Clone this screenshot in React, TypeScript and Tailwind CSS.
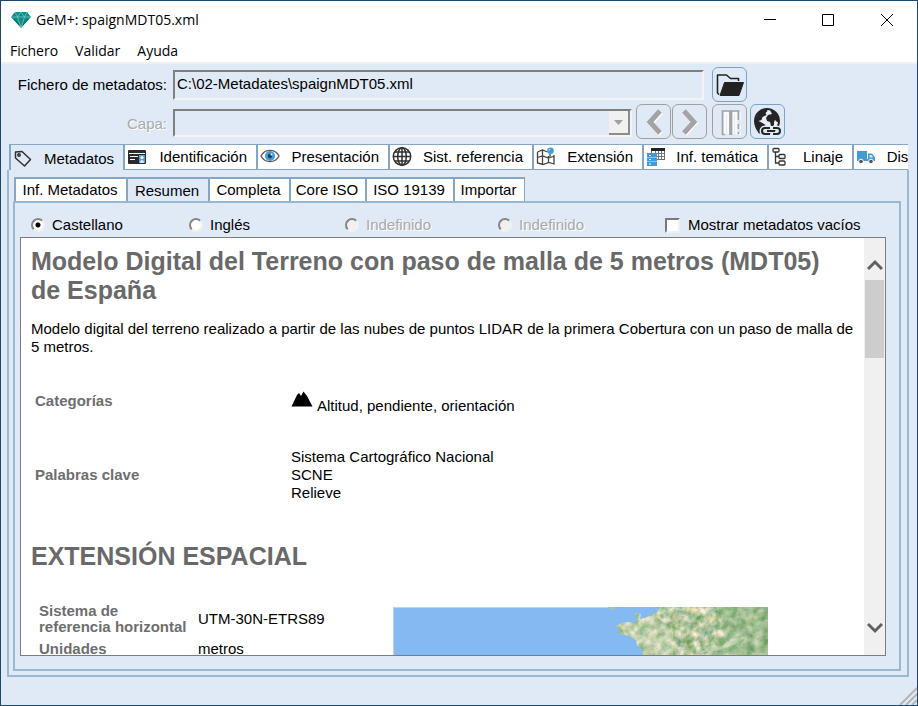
import React, { useState } from 'react';
import clsx from 'clsx';

const LogoIcon = () => (
    <svg width="20" height="18" viewBox="0 0 20 18">
        <path d="M4 1h12l4 5-10 11L0 6z" fill="#0f8b85" />
        <path d="M0.500 6h19M4 1l2.500 5L10 1l3.500 5L16 1M6.500 6L10 17l3.500-11" fill="none" stroke="#7fd0c8" strokeWidth="0.700" />
        <path d="M3 8l5 6M17 8l-5 6" stroke="#0a625e" strokeWidth="1" />
    </svg>
);

const TagIcon = () => (
    <svg width="20" height="20" viewBox="0 0 20 20" fill="none" stroke="#303030" strokeWidth="1.500">
        <path d="M2.500 3L9 2.500l8.500 8-6 6.500-9-8z" strokeLinejoin="round" />
        <circle cx="6" cy="6" r="1.200" />
    </svg>
);

const CardIcon = () => (
    <svg width="20" height="20" viewBox="0 0 20 20">
        <rect x="1" y="3" width="18" height="14" rx="1" fill="#2b2b2b" />
        <rect x="2" y="6" width="16" height="1" fill="#fff" />
        <rect x="3" y="9" width="8" height="1" fill="#fff" />
        <rect x="3" y="12" width="5" height="1" fill="#fff" />
        <rect x="12" y="8" width="6" height="8" fill="#4da3dc" />
        <circle cx="15" cy="10.500" r="1.500" fill="#fff" />
        <path d="M13 16c0-4 4-4 4 0z" fill="#d7ecfa" />
    </svg>
);

const EyeIcon = () => (
    <svg width="20" height="20" viewBox="0 0 20 20">
        <path d="M1 9C5 1.500 15 1.500 19 9 15 16.500 5 16.500 1 9z" fill="#fff" stroke="#5a5a5a" strokeWidth="1.400" />
        <circle cx="10" cy="9" r="5" fill="#429bd5" />
        <circle cx="10" cy="9" r="2.200" fill="#1d3f5a" />
        <circle cx="11.500" cy="7.500" r="1" fill="#fff" />
    </svg>
);

const GridGlobeIcon = () => (
    <svg width="20" height="20" viewBox="0 0 20 20" fill="none" stroke="#303030" strokeWidth="1.500">
        <circle cx="10" cy="9.500" r="8.700" />
        <ellipse cx="10" cy="9.500" rx="4.300" ry="8.700" />
        <path d="M10 1v17M1.500 9.500h17M3 5h14M3 14h14" />
    </svg>
);

const MapIcon = () => (
    <svg width="20" height="20" viewBox="0 0 20 20" fill="none" stroke="#444" strokeWidth="1.300">
        <path d="M1.500 5l5-2 5 2M18 8v9l-5-1.500-6 2-5.500-1.500V5M6.500 3v14M12.500 9v7M1.500 10.500l5-1.500 6 2 5-1.500" />
        <path d="M14 5v6" stroke="#666" strokeWidth="1.500" />
        <circle cx="14.500" cy="3.800" r="3.300" fill="#429bd5" stroke="none" />
        <circle cx="13.500" cy="2.800" r="1" fill="#a9d4f0" stroke="none" />
    </svg>
);

const ThemeIcon = () => (
    <svg width="20" height="20" viewBox="0 0 20 20">
        <rect x="5.500" y="1.500" width="13" height="11" fill="#fff" stroke="#666" />
        <rect x="5" y="1" width="14" height="3" fill="#222" />
        <path d="M6 6.500h13M6 9.500h13M9.500 4v9M12.500 4v9M15.500 4v9" stroke="#777" />
        <path d="M1 6h10v13H1z" fill="#429bd5" />
        <path d="M1 10.500h10M1 14.500h10" stroke="#8cc4e9" />
        <path d="M3 8.500h2M3 12.500h2M3 17h2" stroke="#fff" />
    </svg>
);

const TreeIcon = () => (
    <svg width="20" height="20" viewBox="0 0 20 20" fill="none" stroke="#333" strokeWidth="1.300">
        <rect x="2" y="1.500" width="6" height="3.500" rx="1" />
        <rect x="8" y="7.500" width="6" height="4" rx="1" />
        <rect x="8" y="14" width="6" height="4" rx="1" />
        <path d="M4.500 5v11H8M4.500 9.500H8" />
    </svg>
);

const TruckIcon = () => (
    <svg width="20" height="20" viewBox="0 0 20 20">
        <path d="M1 4h10v10H1zM12 6.500h4l3 4V14h-7z" fill="#429bd5" />
        <path d="M11 12h1v2h-1z" fill="#429bd5" />
        <path d="M13.500 8h2l1.500 2.500h-3.500z" fill="#d7ecfa" />
        <circle cx="5" cy="14.500" r="2.300" fill="#555" stroke="#fff" />
        <circle cx="15" cy="14.500" r="2.300" fill="#555" stroke="#fff" />
    </svg>
);

const FolderIcon = () => (
    <svg width="30" height="26" viewBox="0 0 30 26">
        <path d="M4 22.500L2.500 21V3h9l4 3.500h8V9" fill="none" stroke="#222" strokeWidth="1.600" strokeLinejoin="round" />
        <path d="M9.500 10.500H28.500L24 23.500H5z" fill="#222" stroke="#222" strokeLinejoin="round" />
    </svg>
);

const ArrowIcon = ({ d }: { d: string }) => (
    <svg width="30" height="30" viewBox="0 0 30 30" fill="none" strokeWidth="5">
        <path d={d} stroke="#fff" transform="translate(1 1)" />
        <path d={d} stroke="#a3a3a3" />
    </svg>
);

const ColumnsIcon = () => (
    <svg width="30" height="30" viewBox="0 0 30 30" fill="none">
        <path d="M10 27V6h3v21M18 27V6h3v21M25 5v8M25 18v4M25 25v3" stroke="#fff" strokeWidth="1.500" />
        <path d="M7.500 28V4H15v24M16.500 28V4H23.500v9M23.500 17v5M23.500 25v2M7 27.500h3" stroke="#a3a3a3" strokeWidth="1.700" />
    </svg>
);

const WorldLinkIcon = () => (
    <svg width="30" height="30" viewBox="0 0 30 30">
        <circle cx="14" cy="14" r="12" fill="#e8eef6" stroke="#252525" strokeWidth="2" />
        <path d="M2.500 12l3-6 4-3 4-1 1 2-2 2 1 2-4 2-1 3-3 1 4 2 3 2-1 3-3 2-1 4-2-1-3-5z" fill="#252525" />
        <path d="M17 3l4 1 4 5 1 6-2 0-2-2-1 2 0 4-3 0-1-4-3-1-1-3 2-3 4-1-1-2z" fill="#252525" />
        <g fill="none">
            <path d="M16 21h-4a3 3 0 0 0 0 6h4M20 21h4a3 3 0 0 1 0 6h-4M14 24h8" stroke="#e0eaf6" strokeWidth="5" />
            <path d="M17 21h-5a3 3 0 0 0 0 6h5M20 21h4a3 3 0 0 1 0 6h-4M14 24h8" stroke="#252525" strokeWidth="2" />
        </g>
    </svg>
);

const MountainIcon = () => (
    <svg width="22" height="16" viewBox="0 0 22 16" className="mr-1 inline-block align-[4px]">
        <path d="M0.500 15.500L6 4l2-2 2 3 2.500-4.500L16 5l5.500 10.500z" fill="#000" />
    </svg>
);

const CoastMap = () => (
    <svg width="375" height="280" viewBox="0 0 375 280" role="img" aria-label="Mapa de extensión">
        <defs>
            <filter id="terrain" x="0" y="0" width="100%" height="100%" colorInterpolationFilters="sRGB">
                <feTurbulence type="fractalNoise" baseFrequency="0.130" numOctaves="5" seed="8" />
                <feColorMatrix values="0.900 0.200 0 0 0.140  0.500 0 0 0 0.520  0.700 0 0.200 0 0.160  0 0 0 0 1" />
            </filter>
            <clipPath id="land">
                <path d="M375 0H268l-6 6-10 5-5 1 1-5-7-1 3 6-1 4-8-1-7 1-5 3 3 3-2 4 8 2 6 2 5 3 1 5 5 4 1 8 18 46-10 80 80 68h39z" />
                <path d="M215 0h7l-2 3-3-1z" />
            </clipPath>
        </defs>
        <rect width="375" height="280" fill="#84baf1" />
        <g clipPath="url(#land)">
            <rect x="200" width="175" height="280" filter="url(#terrain)" />
            <path d="M223 16l25-5 14 0 18 14 0 24h-31z" fill="#e0e5c8" opacity=".35" />
            <path d="M325 0h50v48h-60l16-20z" fill="#7eae78" opacity=".35" />
            <path d="M307 46l10-8 12 1 10-7 16-3-12 8-16 6z" fill="#f0f0df" opacity=".4" />
        </g>
        <path d="M0.500 280V0.500H215" fill="none" stroke="#b7d6f5" />
    </svg>
);

const sections = [
    { name: 'Metadatos', icon: <TagIcon />, width: 'w-[114px]' },
    { name: 'Identificación', icon: <CardIcon />, width: 'w-[133px]' },
    { name: 'Presentación', icon: <EyeIcon />, width: 'w-[132px]' },
    { name: 'Sist. referencia', icon: <GridGlobeIcon />, width: 'w-[144px]' },
    { name: 'Extensión', icon: <MapIcon />, width: 'w-[110px]' },
    { name: 'Inf. temática', icon: <ThemeIcon />, width: 'w-[125px]' },
    { name: 'Linaje', icon: <TreeIcon />, width: 'w-[85px]' },
    { name: 'Distribución', icon: <TruckIcon />, width: 'w-[122px]' },
];

const views = [
    { name: 'Inf. Metadatos', width: 'w-[112px]' },
    { name: 'Resumen', width: 'w-[82px]' },
    { name: 'Completa', width: 'w-[81px]' },
    { name: 'Core ISO', width: 'w-[76px]' },
    { name: 'ISO 19139', width: 'w-[88px]' },
    { name: 'Importar', width: 'w-[72px]' },
];

const languages = [
    { id: 'es', name: 'Castellano', disabled: false },
    { id: 'en', name: 'Inglés', disabled: false },
    { id: 'u1', name: 'Indefinido', disabled: true },
    { id: 'u2', name: 'Indefinido', disabled: true },
];

const toolButton = 'flex h-[35px] w-[35px] shrink-0 items-center justify-center rounded-md border';
const sunken = 'border-2 border-t-[#7f7f7f] border-l-[#7f7f7f] border-r-[#f4f4f4] border-b-[#f4f4f4] bg-[#e0eaf6]';
const disabledText = 'text-[#a9a9a9] [text-shadow:1px_1px_0_#fff]';

export default function App() {
    const [section, setSection] = useState('Metadatos');
    const [view, setView] = useState('Resumen');
    const [language, setLanguage] = useState('es');
    const [showEmpty, setShowEmpty] = useState(false);

    return (
        <div className="flex h-screen flex-col overflow-hidden border border-[#1c486c] bg-[#e0eaf6] font-['Liberation_Sans',Arial,sans-serif] text-[15px] leading-[18px] text-black">
            {/* Title bar */}
            <header className="flex h-[38px] shrink-0 items-center bg-white pl-[10px] font-['Open_Sans','Noto_Sans',sans-serif] text-sm">
                <LogoIcon />
                <h1 className="ml-[5px] flex-1">GeM+: spaignMDT05.xml</h1>
                <button aria-label="Minimizar" className="flex h-full w-[58px] items-center justify-center">
                    <svg width="12" height="12" stroke="#000"><path d="M0 5.500h12" /></svg>
                </button>
                <button aria-label="Maximizar" className="flex h-full w-[58px] items-center justify-center">
                    <svg width="12" height="12" stroke="#000" fill="none"><path d="M.5.5h11v11H.5z" /></svg>
                </button>
                <button aria-label="Cerrar" className="flex h-full w-[60px] items-center justify-center">
                    <svg width="12" height="12" stroke="#000"><path d="M0 0l12 12M12 0L0 12" /></svg>
                </button>
            </header>
            <nav className="flex h-[25px] shrink-0 items-center gap-[17px] border-b-2 border-[#f0f0f0] bg-white pl-[9px] font-['Open_Sans','Noto_Sans',sans-serif] text-sm">
                <button>Fichero</button>
                <button>Validar</button>
                <button>Ayuda</button>
            </nav>

            {/* File and layer */}
            <div className="mt-[3px] flex shrink-0 items-center pr-[170px]">
                <label htmlFor="file" className="w-[166px] text-right">Fichero de metadatos:</label>
                <input id="file" readOnly value="C:\02-Metadates\spaignMDT05.xml" className={clsx(sunken, 'ml-[6px] h-[30px] min-w-0 flex-1 pl-0.5 pb-0.5 outline-none')} />
                <button aria-label="Abrir" className={clsx(toolButton, 'ml-2 border-[#7ba3c4]')}>
                    <FolderIcon />
                </button>
            </div>
            <div className="mt-[2px] flex shrink-0 items-center pr-[132px]">
                <label htmlFor="layer" className={clsx('w-[166px] pt-1 text-right', disabledText)}>Capa:</label>
                <div className={clsx(sunken, 'mt-[3px] ml-[6px] flex h-7 min-w-0 flex-1')}>
                    <select id="layer" disabled className="min-w-0 flex-1 appearance-none" />
                    <span className="flex w-[21px] items-center justify-center border-r-2 border-b-2 border-[#8c8c8c] bg-[#f0f0f0]">
                        <svg width="9" height="5"><path d="M0 0h9L4.500 5z" fill="#a0a0a0" /></svg>
                    </span>
                </div>
                <button disabled aria-label="Anterior" className={clsx(toolButton, 'ml-1 border-[#a0a0a0]')}>
                    <ArrowIcon d="M21 4L11 15l10 11" />
                </button>
                <button disabled aria-label="Siguiente" className={clsx(toolButton, 'ml-px border-[#a0a0a0]')}>
                    <ArrowIcon d="M9 4l10 11L9 26" />
                </button>
                <button disabled aria-label="Columnas" className={clsx(toolButton, 'ml-[5px] border-[#a0a0a0]')}>
                    <ColumnsIcon />
                </button>
                <button aria-label="Servicio web" className={clsx(toolButton, 'ml-[3px] border-[#7ba3c4]')}>
                    <WorldLinkIcon />
                </button>
            </div>

            {/* Section tabs */}
            <div className="mt-[5px] mr-2 ml-[6px] flex min-h-0 flex-1 flex-col">
                <div role="tablist" className="mr-px ml-[2px] flex shrink-0 overflow-hidden border-t border-[#85a7c3]">
                    {sections.map(s => (
                        <button
                            key={s.name}
                            role="tab"
                            aria-selected={s.name === section}
                            onClick={() => setSection(s.name)}
                            className={clsx(
                                'flex h-[25px] shrink-0 items-center justify-between border-l-2 border-[#85a7c3] pr-[9px] pl-0.5 whitespace-nowrap',
                                s.width,
                                s.name === section ? 'pt-0.5' : 'border-b bg-white',
                            )}
                        >
                            {s.icon}
                            <span>{s.name}</span>
                        </button>
                    ))}
                </div>
                <div className="mb-7 flex min-h-0 flex-1 flex-col border-2 border-t-0 border-[#9bb8d0] pt-[7px] pr-[6px] pb-1 pl-1">
                    {/* View tabs */}
                    <div role="tablist" className="flex shrink-0 pl-px">
                        {views.map(v => (
                            <button
                                key={v.name}
                                role="tab"
                                aria-selected={v.name === view}
                                onClick={() => setView(v.name)}
                                className={clsx(
                                    'h-6 border-t-2 border-l-2 border-[#85a7c3] pr-0.5 text-center whitespace-nowrap last:border-r',
                                    v.width,
                                    v.name === view ? 'pt-0.5' : 'bg-white',
                                )}
                            >
                                {v.name}
                            </button>
                        ))}
                    </div>
                    <div className="flex min-h-0 flex-1 flex-col border-2 border-[#9bb8d0] pr-[13px] pb-[13px] pl-[5px]">
                        <div className="grid shrink-0 grid-cols-[158px_156px_153px_167px_auto] pt-[13px] pb-[3px] pl-[11px]">
                            {languages.map(l => (
                                <label key={l.id} className={clsx('flex items-center gap-[7px]', l.disabled && disabledText)}>
                                    <input
                                        type="radio"
                                        name="language"
                                        disabled={l.disabled}
                                        checked={language === l.id}
                                        onChange={() => setLanguage(l.id)}
                                        className="h-[14px] w-[14px] appearance-none rounded-full border-2 border-t-[#858585] border-r-[#f0f0f0] border-b-[#f0f0f0] border-l-[#858585] bg-white checked:bg-[radial-gradient(circle,#000_2px,#fff_3px)] disabled:bg-[#f0f0f0]"
                                    />
                                    {l.name}
                                </label>
                            ))}
                            <label className="flex items-center gap-2 whitespace-nowrap">
                                <input
                                    type="checkbox"
                                    checked={showEmpty}
                                    onChange={e => setShowEmpty(e.target.checked)}
                                    className="h-[15px] w-[15px] appearance-none border-2 border-t-[#7a7a7a] border-r-[#f0f0f0] border-b-[#f0f0f0] border-l-[#7a7a7a] bg-white checked:bg-black"
                                />
                                Mostrar metadatos vacíos
                            </label>
                        </div>

                        {/* Document */}
                        <div className="flex min-h-0 flex-1 border border-[#7d7d7d] bg-white">
                            <article className="min-w-0 flex-1 overflow-hidden pl-[10px]">
                                <h2 className="pt-[9px] pr-5 text-[25px] leading-[29px] font-bold text-[#696969]">
                                    Modelo Digital del Terreno con paso de malla de 5 metros (MDT05) de España
                                </h2>
                                <p className="mt-[15px] pr-1">
                                    Modelo digital del terreno realizado a partir de las nubes de puntos LIDAR de la primera Cobertura con un paso de malla de 5 metros.
                                </p>
                                <table className="mt-[29px] ml-1">
                                    <tbody>
                                        <tr className="h-[32px]">
                                            <th scope="row" className="w-[256px] text-left align-middle text-[#6e6e6e]">Categorías</th>
                                            <td className="pt-1"><MountainIcon />Altitud, pendiente, orientación</td>
                                        </tr>
                                        <tr className="h-[116px]">
                                            <th scope="row" className="text-left align-middle text-[#6e6e6e]">Palabras clave</th>
                                            <td>Sistema Cartográfico Nacional<br />SCNE<br />Relieve</td>
                                        </tr>
                                    </tbody>
                                </table>
                                <h2 className="mt-[9px] text-[25px] leading-[29px] font-bold text-[#696969]">EXTENSIÓN ESPACIAL</h2>
                                <div className="mt-8 flex pl-2">
                                    <table className="w-[354px] shrink-0 self-start">
                                        <tbody>
                                            <tr className="h-[32px]">
                                                <th scope="row" className="w-[159px] text-left leading-4 text-[#6e6e6e]">Sistema de<br />referencia horizontal</th>
                                                <td>UTM-30N-ETRS89</td>
                                            </tr>
                                            <tr className="h-[28px]">
                                                <th scope="row" className="text-left text-[#6e6e6e]">Unidades</th>
                                                <td>metros</td>
                                            </tr>
                                        </tbody>
                                    </table>
                                    <div className="pt-1">
                                        <CoastMap />
                                    </div>
                                </div>
                            </article>
                            <div className="flex w-[21px] shrink-0 flex-col items-center bg-[#f0f0f0]">
                                <button aria-label="Subir" className="flex h-[42px] w-full items-end justify-center pb-[9px]">
                                    <svg width="16" height="13" fill="none" stroke="#606060" strokeWidth="3"><path d="M1 11l7-7 7 7" /></svg>
                                </button>
                                <div className="h-[78px] w-[19px] bg-[#cdcdcd]" />
                                <button aria-label="Bajar" className="mt-auto flex h-[42px] w-full justify-center pt-2">
                                    <svg width="16" height="13" fill="none" stroke="#606060" strokeWidth="3"><path d="M1 3l7 7 7-7" /></svg>
                                </button>
                            </div>
                        </div>
                    </div>
                </div>
            </div>
            <svg width="18" height="18" className="absolute right-px bottom-px" stroke="#b5b5b5" strokeWidth="2">
                <path d="M1 18L18 1M7 18L18 7M13 18l5-5" />
            </svg>
        </div>
    );
}
